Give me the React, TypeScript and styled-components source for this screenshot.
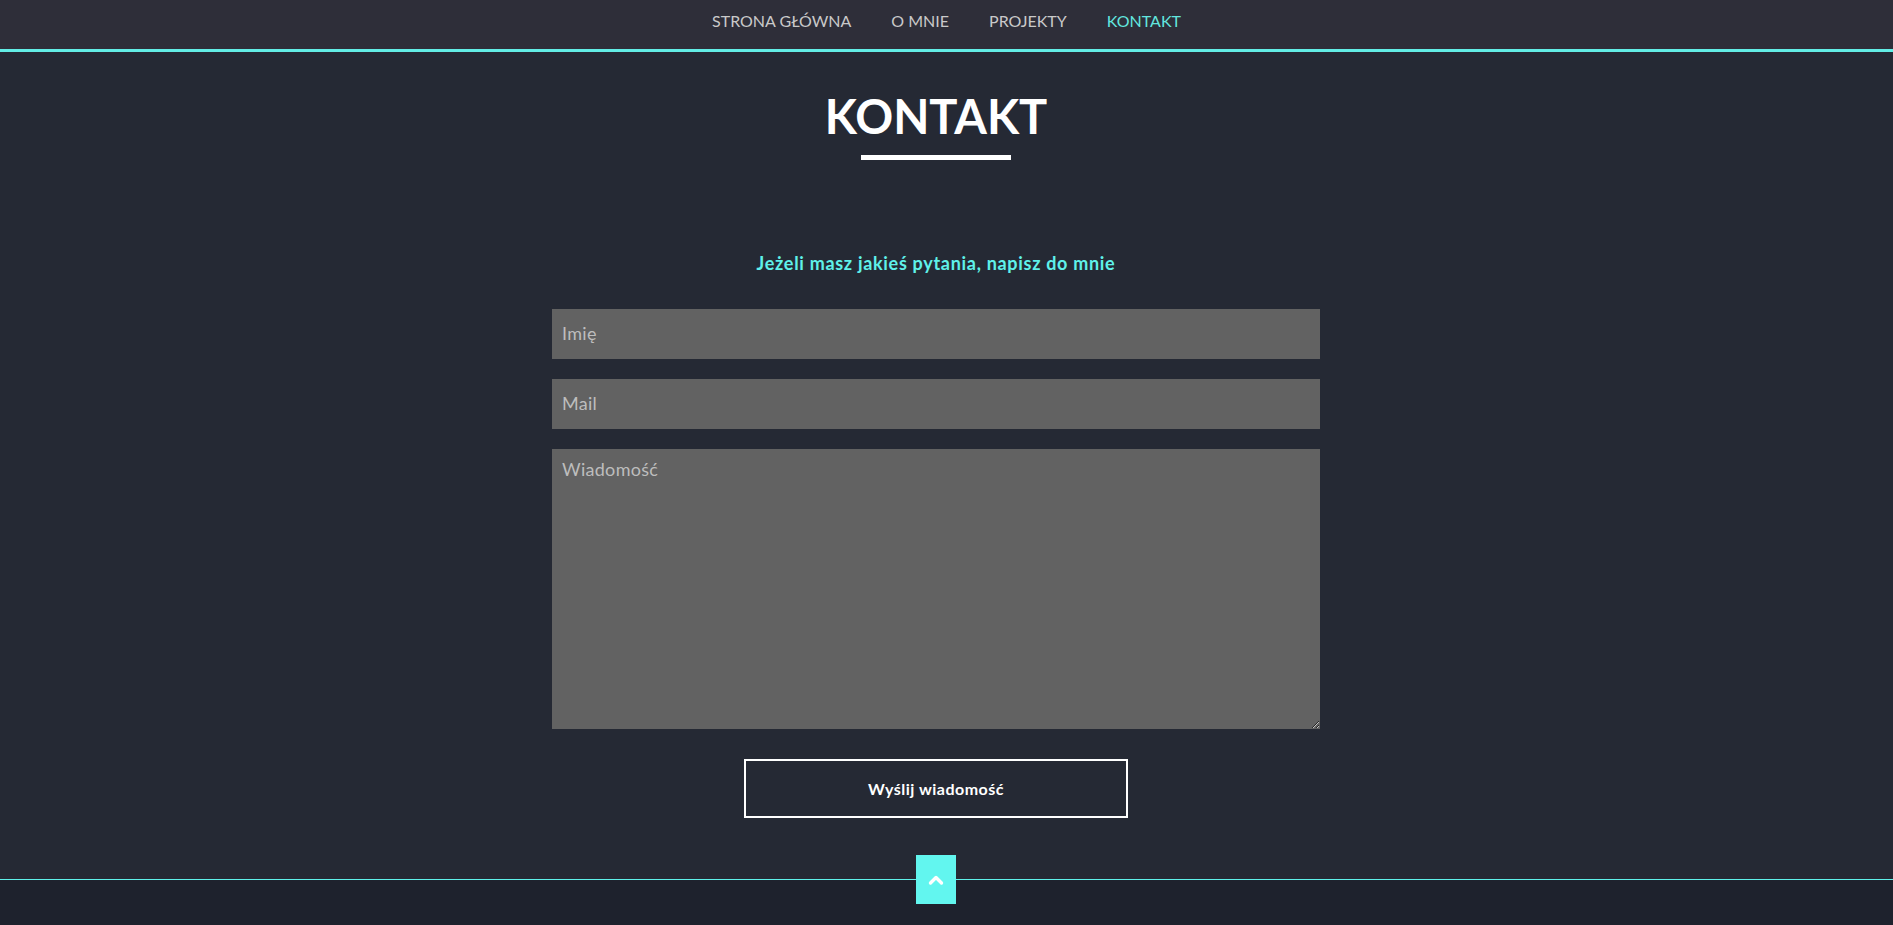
import styled, { createGlobalStyle } from "styled-components";

const GlobalStyle = createGlobalStyle`
  * {
    box-sizing: border-box;
  }

  body {
    margin: 0;
    background: #252934;
    font-family: Lato, "Open Sans", sans-serif;
  }
`;

const NavBar = styled.nav`
  height: 52px;
  background: #2e2e39;
  border-bottom: 3px solid #62ede6;
  display: flex;
  justify-content: center;
  align-items: center;
  padding-bottom: 8px;
`;

const NavList = styled.ul`
  list-style: none;
  display: flex;
  gap: 40px;
  margin: 0;
  padding: 0;
`;

const NavLink = styled.a<{ $active?: boolean }>`
  font-size: 16px;
  text-transform: uppercase;
  text-decoration: none;
  color: ${(p) => (p.$active ? "#62e6df" : "#c9c9c9")};
  cursor: pointer;
`;

const Section = styled.main`
  padding-right: 21px;
  display: flex;
  flex-direction: column;
  align-items: center;
`;

const Title = styled.h1`
  margin: 35px 0 0;
  font-size: 47px;
  line-height: 58px;
  font-weight: 700;
  color: #ffffff;
`;

const TitleLine = styled.span`
  display: block;
  width: 150px;
  height: 5px;
  margin-top: 10px;
  background: #ffffff;
`;

const Lead = styled.p`
  margin: 92px 0 0;
  font-size: 18px;
  line-height: 22px;
  font-weight: 700;
  letter-spacing: 0.7px;
  color: #5ff1ea;
`;

const Form = styled.form`
  width: 768px;
  margin-top: 35px;
  display: flex;
  flex-direction: column;
  align-items: center;
  gap: 20px;
`;

const Field = styled.input`
  width: 100%;
  height: 50px;
  border: none;
  outline: none;
  background: #626262;
  padding: 0 10px 3px;
  font-family: inherit;
  font-size: 18px;
  letter-spacing: 0.3px;
  color: #e0e0e0;

  &::placeholder {
    color: #bdbdbd;
  }
`;

const MessageField = styled.textarea`
  width: 100%;
  height: 280px;
  border: none;
  outline: none;
  background: #626262;
  padding: 9px 10px;
  font-family: inherit;
  font-size: 18px;
  letter-spacing: 0.3px;
  color: #e0e0e0;
  display: block;

  &::placeholder {
    color: #bdbdbd;
  }
`;

const SendButton = styled.button`
  width: 384px;
  height: 59px;
  margin-top: 10px;
  background: transparent;
  border: 2px solid #ffffff;
  color: #ffffff;
  font-family: inherit;
  font-size: 16px;
  font-weight: 700;
  letter-spacing: 0.5px;
  cursor: pointer;
`;

const Footer = styled.footer`
  position: relative;
  margin-top: 61px;
  height: 120px;
  background: #1e222d;
  border-top: 1px solid #5ff1ea;
`;

const TopButton = styled.a`
  position: absolute;
  top: -25px;
  left: calc(50% - 31px);
  width: 40px;
  height: 49px;
  background: #62f6ef;
  display: flex;
  align-items: center;
  justify-content: center;
  cursor: pointer;
`;

export default function App() {
  const links = ["Strona główna", "O mnie", "Projekty", "Kontakt"];

  return (
    <>
      <GlobalStyle />
      <NavBar>
        <NavList>
          {links.map((link) => (
            <li key={link}>
              <NavLink $active={link === "Kontakt"}>{link}</NavLink>
            </li>
          ))}
        </NavList>
      </NavBar>
      <Section>
        <Title>KONTAKT</Title>
        <TitleLine />
        <Lead>Jeżeli masz jakieś pytania, napisz do mnie</Lead>
        <Form onSubmit={(e) => e.preventDefault()}>
          <Field type="text" placeholder="Imię" />
          <Field type="email" placeholder="Mail" />
          <MessageField placeholder="Wiadomość" />
          <SendButton type="submit">Wyślij wiadomość</SendButton>
        </Form>
      </Section>
      <Footer>
        <TopButton>
          <svg width="16" height="12" viewBox="0 0 16 12">
            <polyline
              points="2.5,9 8,3.5 13.5,9"
              fill="none"
              stroke="#ffffff"
              strokeWidth="3.4"
              strokeLinecap="round"
              strokeLinejoin="round"
            />
          </svg>
        </TopButton>
      </Footer>
    </>
  );
}
